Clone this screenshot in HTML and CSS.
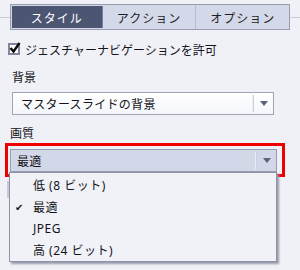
FILE: index.html
```html
<html>

<head>
    <meta charset="utf-8">
    <link rel="stylesheet" href="styles.css">
</head>

<body>
    <div class="panel">
        <div class="tabRow">
            <div class="tabLine"></div>
            <div class="tabs">
                <div class="tab tabSelected">スタイル</div>
                <div class="tab">アクション</div>
                <div class="tab tabLast">オプション</div>
            </div>
            <div class="tabLine"></div>
        </div>

        <div class="checkRow">
            <div class="checkBox">
                <svg class="checkMark" width="12" height="12" viewBox="0 0 12 12">
                    <path d="M1.5 6 L4.5 9.5 L10.5 1" fill="none" stroke="#0a0a0a" stroke-width="2.4"/>
                </svg>
            </div>
            <div class="checkText">ジェスチャーナビゲーションを許可</div>
        </div>

        <div class="label">背景</div>
        <div class="combo comboWhite">
            <div class="comboText">マスタースライドの背景</div>
            <div class="comboSep"></div>
            <div class="comboArrow"></div>
        </div>

        <div class="label labelQuality">画質</div>
        <div class="highlight">
            <div class="combo comboBlue">
                <div class="comboText">最適</div>
                <div class="comboSep"></div>
                <div class="comboArrow"></div>
            </div>
        </div>

        <div class="sideBar"></div>

        <div class="dropList">
            <div class="item">低 (8 ビット)</div>
            <div class="item"><span class="tick">✔</span>最適</div>
            <div class="item">JPEG</div>
            <div class="item">高 (24 ビット)</div>
        </div>
    </div>
</body>
</html>
```

FILE: styles.css
```css
body {
    margin: 0;
    background-color: rgb(240, 241, 247);
    font-family: "Noto Sans CJK JP", "Noto Sans", sans-serif;
    font-size: 12px;
    color: rgb(20, 20, 24);
}

.panel {
    position: relative;
    width: 300px;
    height: 270px;
}

.tabRow {
    display: flex;
    align-items: center;
    padding-top: 4px;
}

.tabLine {
    flex: 1;
    height: 1px;
    background-color: rgb(200, 203, 214);
}

.tabs {
    display: flex;
    width: 278px;
    height: 24px;
    border: 1px solid rgb(152, 157, 176);
    background-color: rgb(212, 217, 234);
}

.tab {
    width: 93px;
    display: flex;
    align-items: center;
    justify-content: center;
    letter-spacing: 1px;
    border-right: 1px solid rgb(185, 190, 208);
    color: rgb(30, 30, 36);
}

.tabLast {
    border-right: none;
}

.tabSelected {
    width: 90px;
    margin: 1px 0 1px 1px;
    background-color: rgb(76, 86, 114);
    color: white;
    border-right: 1px solid rgb(120, 128, 150);
}

.checkRow {
    display: flex;
    align-items: center;
    gap: 5px;
    margin: 11px 0 0 8px;
    height: 16px;
}

.checkBox {
    position: relative;
    width: 8px;
    height: 8px;
    border: 2px solid rgb(128, 134, 158);
    background-color: white;
}

.checkMark {
    position: absolute;
    top: -3px;
    left: -1px;
}

.label {
    margin: 12px 0 0 12px;
    height: 16px;
    line-height: 16px;
}

.labelQuality {
    margin: 10px 0 0 10px;
}

.combo {
    display: flex;
    align-items: center;
    height: 21px;
    border: 1px solid rgb(158, 163, 181);
}

.comboWhite {
    width: 260px;
    margin: 7px 0 0 12px;
    background: linear-gradient(rgb(255, 255, 255), rgb(244, 246, 251));
}

.comboBlue {
    width: 265px;
    margin: 3px 0 0 2px;
    background-color: rgb(211, 216, 232);
    border-color: rgb(150, 156, 178);
}

.comboText {
    flex: 1;
    padding-left: 8px;
    letter-spacing: 0.3px;
}

.comboBlue .comboText {
    padding-left: 6px;
}

.comboSep {
    width: 1px;
    height: 17px;
    border-left: 1px solid rgb(235, 237, 244);
    background-color: rgb(205, 209, 222);
}

.comboArrow {
    width: 0;
    height: 0;
    margin: 0 5px 0 6px;
    border-left: 4px solid transparent;
    border-right: 4px solid transparent;
    border-top: 5px solid rgb(92, 98, 122);
}

.highlight {
    width: 274px;
    height: 28px;
    margin: 2px 0 0 5px;
    border: 3px solid rgb(238, 0, 0);
}

.sideBar {
    width: 3px;
    height: 17px;
    margin: 4px 0 0 7px;
    background-color: rgb(200, 203, 214);
}

.dropList {
    position: absolute;
    top: 172px;
    left: 9px;
    width: 266px;
    height: 86px;
    padding-top: 2px;
    background-color: rgb(241, 242, 248);
    border: 1px solid rgb(142, 147, 166);
    box-shadow: 2px 2px 2px rgb(150, 154, 170);
}

.item {
    position: relative;
    height: 21.5px;
    line-height: 21px;
    padding-left: 23px;
    font-family: "Noto Sans", "Noto Sans CJK JP", sans-serif;
    letter-spacing: 0.5px;
}

.tick {
    position: absolute;
    left: 5px;
    font-size: 10px;
}
```
